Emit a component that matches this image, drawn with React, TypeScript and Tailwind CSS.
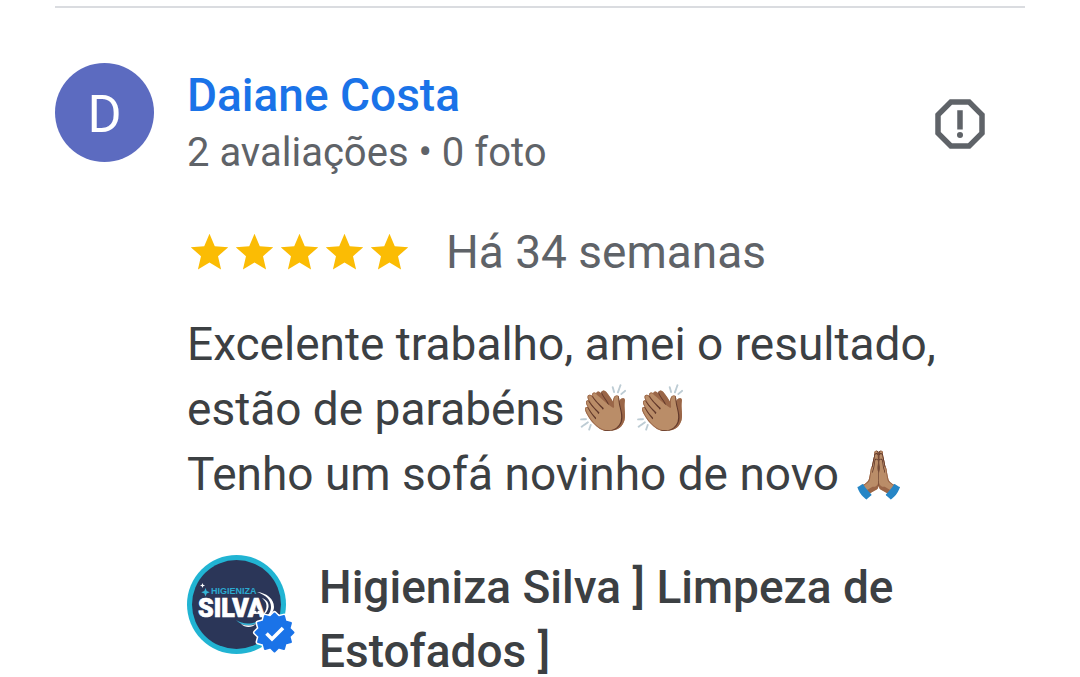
import React from 'react';

const STARS = [1, 2, 3, 4, 5];

// 12 rounded teeth around the verified badge
const BADGE_POINTS = Array.from({ length: 24 }, (_, i) => {
  const angle = (i * Math.PI) / 12;
  const radius = i % 2 === 0 ? 19 : 15.5;
  return `${(87.5 + radius * Math.sin(angle)).toFixed(2)},${(77.5 - radius * Math.cos(angle)).toFixed(2)}`;
}).join(' ');

function Star() {
  return (
    <svg viewBox="0 0 24 24" className="h-[45px] w-[45px] fill-[#fbbc04]" aria-hidden="true">
      <path d="M12 17.27 18.18 21l-1.64-7.03L22 9.24l-7.19-.61L12 2 9.19 8.63 2 9.24l5.46 4.73L5.82 21z" />
    </svg>
  );
}

function ReportButton() {
  return (
    <button type="button" aria-label="Denunciar avaliação" className="mt-7 mr-8 shrink-0">
      <svg viewBox="0 0 24 24" className="h-[66px] w-[66px] fill-[#5f6368]">
        <path d="M15.73 3H8.27L3 8.27v7.46L8.27 21h7.46L21 15.73V8.27L15.73 3zM19 14.9 14.9 19H9.1L5 14.9V9.1L9.1 5h5.8L19 9.1v5.8z" />
        <circle cx="12" cy="16" r="1.1" />
        <path d="M11 7h2v7h-2z" />
      </svg>
    </button>
  );
}

function BusinessLogo() {
  return (
    <svg viewBox="0 0 110 100" className="h-[100px] w-[110px] shrink-0" role="img" aria-label="Higieniza Silva">
      <circle cx="49.5" cy="49.5" r="49.5" fill="#21b4d3" />
      <circle cx="49.5" cy="49.5" r="44.5" fill="#2b3658" />
      <path d="M18.5 33l1.2 3 3 1.2-3 1.2-1.2 3-1.2-3-3-1.2 3-1.2z" fill="#35b5d6" />
      <path d="M15.500 28l.7 1.800 1.800.7-1.800.7-.7 1.800-.7-1.800-1.800-.7 1.800-.7z" fill="#fff" />
      <text x="24" y="39" fontSize="9" fontWeight="700" fill="#2ba9cf" className="font-['Liberation_Sans',sans-serif]">
        HIGIENIZA
      </text>
      <text
        x="11"
        y="62"
        fontSize="25"
        fontWeight="900"
        fill="#fff"
        stroke="#fff"
        strokeWidth="0.7"
        className="font-['Roboto',sans-serif]"
      >
        SILVA
      </text>
      <path d="M70 52.5l.8 2 2 .8-2 .8-.8 2-.8-2-2-.8 2-.8z" fill="#2b3658" />
      <path d="M70 37c10 1 17 7 17 15 0 5-4 9-10 11 5-3 7-7 7-11 0-7-5-12-14-15z" fill="#fff" />
      <path d="M75 43c5 2 7 5 6.500 9-.5 4-3 7-6.500 9 3-4 4.500-6 4.500-10 0-3-1.500-5.500-4.500-8z" fill="#fff" />
      <path d="M49 65c6 4 14 5 23 1-6 6-17 6-23-1z" fill="#35b5d6" />
      <path d="M54 69c5 2 10 2 15 0-4 4-11 4-15 0z" fill="#fff" />
      <polygon points={BADGE_POINTS} fill="#fff" stroke="#fff" strokeWidth="5" strokeLinejoin="round" />
      <polygon points={BADGE_POINTS} fill="#1a73e8" stroke="#1a73e8" strokeWidth="2" strokeLinejoin="round" />
      <path d="M79.5 78.5l5.500 5.500 11-11" fill="none" stroke="#fff" strokeWidth="3.600" />
    </svg>
  );
}

export default function App() {
  return (
    <main className="h-screen overflow-hidden bg-white px-[55px] pt-[6px] font-['Roboto',sans-serif] text-[46px] leading-[64px] text-[#3c4043]">
      <article className="border-t-2 border-[#dadce0] pt-[55px]">
        <header className="flex items-start">
          <div className="flex h-[99px] w-[99px] shrink-0 items-center justify-center rounded-full bg-[#5c6bc0] pt-1 text-[52px] text-white">
            D
          </div>
          <div className="ml-[33px] flex-1 pt-[3px] leading-[58px]">
            <h2 className="font-medium text-[#1a73e8]">Daiane Costa</h2>
            <p className="text-[40px] text-[#5f6368]">2 avaliações • 0 foto</p>
          </div>
          <ReportButton />
        </header>
        <div className="ml-[132px]">
          <div className="mt-[38px] flex items-center gap-[34px]">
            <div className="flex" role="img" aria-label="5 estrelas">
              {STARS.map((n) => (
                <Star key={n} />
              ))}
            </div>
            <time className="text-[#5f6368]">Há 34 semanas</time>
          </div>
          <p className="mt-7 leading-[65px]">
            Excelente trabalho, amei o resultado,
            <br />
            estão de parabéns 👏🏽👏🏽
            <br />
            Tenho um sofá novinho de novo 🙏🏽
          </p>
          <section className="mt-12 flex items-start gap-[22px]">
            <BusinessLogo />
            <h3 className="font-medium">
              Higieniza Silva ] Limpeza de
              <br />
              Estofados ]
            </h3>
          </section>
        </div>
      </article>
    </main>
  );
}
